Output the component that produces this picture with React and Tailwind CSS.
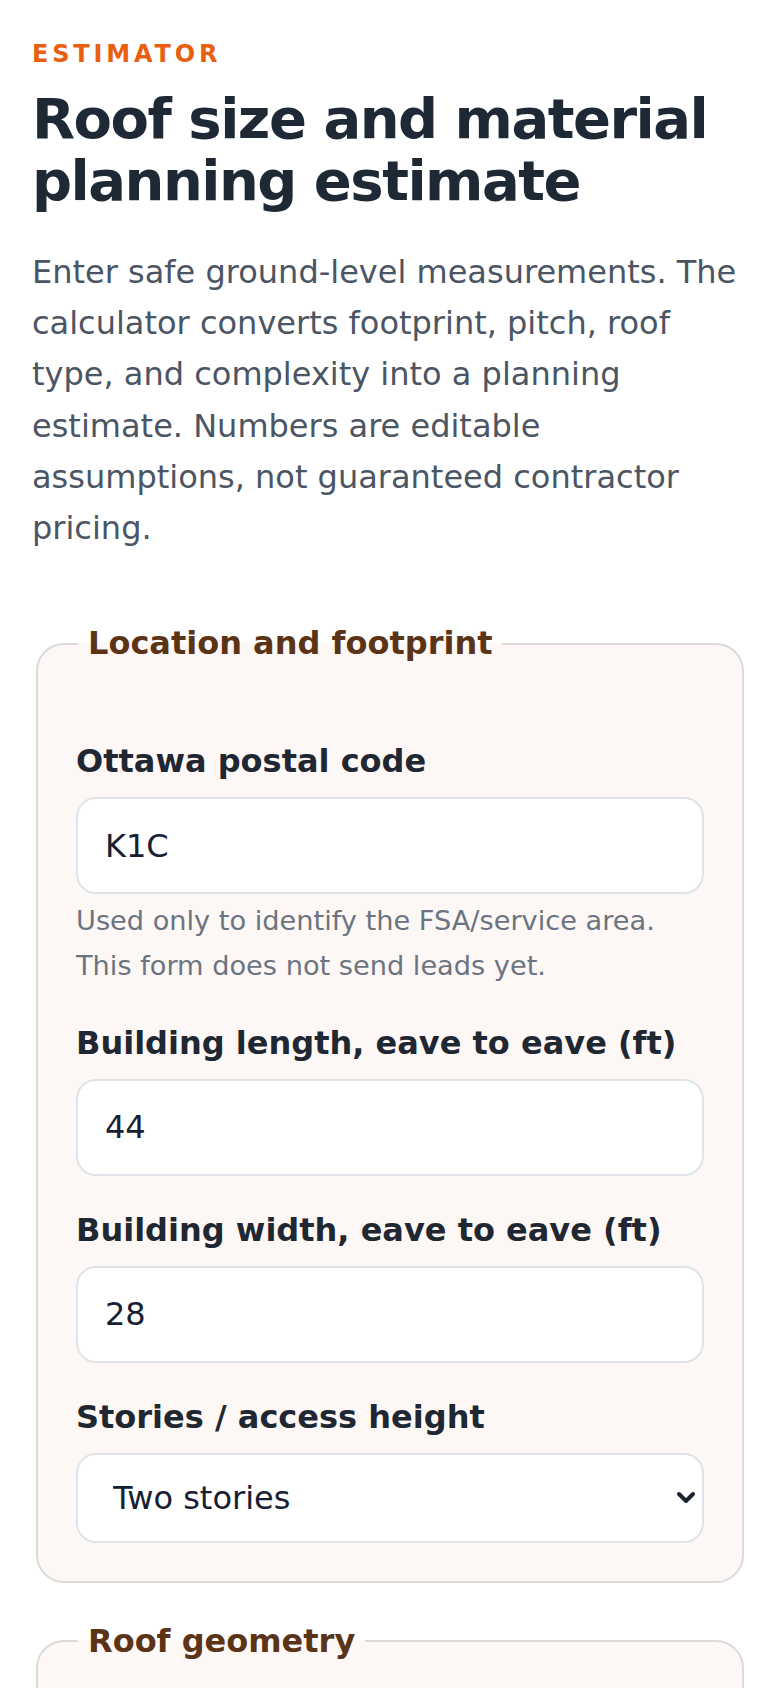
import React, { useState } from 'react';

const fieldBox =
  'block w-full h-[97px] rounded-[20px] border-2 border-[#dfe3ea] bg-white px-[27px] text-[32px] text-[#172033] outline-none';

function Field({ label, value, onChange, hint }) {
  return (
    <div className="flex flex-col">
      <label className="mb-[17px] text-[32px] font-bold leading-[38px] text-[#1f2732]">{label}</label>
      <input className={fieldBox} value={value} onChange={(e) => onChange(e.target.value)} />
      {hint && (
        <p className="mt-[5px] text-[27.2px] leading-[44.8px] text-[#6b7480]">{hint}</p>
      )}
    </div>
  );
}

function SelectField({ label, value, onChange, options }) {
  return (
    <div className="flex flex-col">
      <label className="mb-[17px] text-[32px] font-bold leading-[38px] text-[#1f2732]">{label}</label>
      <div className="relative">
        <select
          className="block w-full h-[90px] appearance-none rounded-[20px] border-2 border-[#dfe3ea] bg-white pl-[35px] pr-[48px] text-[32px] text-[#172033] outline-none"
          value={value}
          onChange={(e) => onChange(e.target.value)}
        >
          {options.map((o) => (
            <option key={o}>{o}</option>
          ))}
        </select>
        {/* native-looking chevron */}
        <svg
          className="pointer-events-none absolute right-[8px] top-1/2 -translate-y-1/2"
          width="20"
          height="14"
          viewBox="0 0 20 14"
        >
          <polyline points="3,3 10,10 17,3" fill="none" stroke="#1b2230" strokeWidth="4" strokeLinecap="round" strokeLinejoin="round" />
        </svg>
      </div>
    </div>
  );
}

function Section({ title, children, className = '' }) {
  return (
    <fieldset
      className={`mx-[4px] rounded-[28px] border-2 border-[#dcd9d9] bg-[#fdf8f5] px-[38px] pt-[80px] pb-[38px] ${className}`}
    >
      <legend className="ml-[2px] px-[10px] text-[32px] font-bold leading-[37px] text-[#5b3417]">{title}</legend>
      <div className="flex flex-col gap-[35px]">{children}</div>
    </fieldset>
  );
}

export default function App() {
  const [postal, setPostal] = useState('K1C');
  const [length, setLength] = useState('44');
  const [width, setWidth] = useState('28');
  const [stories, setStories] = useState('Two stories');
  const [pitch, setPitch] = useState('6/12');
  const [roofType, setRoofType] = useState('Gable');

  return (
    <div className="min-h-screen bg-white font-['DejaVu_Sans',sans-serif]">
      <div className="px-8 pt-[40px] pb-16">
        {/* Header */}
        <p className="text-[24px] font-bold uppercase leading-[28px] tracking-[0.16em] text-[#e8600f]">Estimator</p>
        <h1 className="mt-[20px] text-[56px] font-bold leading-[62px] tracking-[-0.027em] text-[#1e2935]">
          Roof size and material planning estimate
        </h1>
        <p className="mt-[35px] text-[32px] leading-[1.6] text-[#4b5563]">
          Enter safe ground-level measurements. The calculator converts footprint, pitch, roof type, and complexity
          into a planning estimate. Numbers are editable assumptions, not guaranteed contractor pricing.
        </p>

        {/* Form */}
        <form className="mt-[71px]" onSubmit={(e) => e.preventDefault()}>
          <Section title="Location and footprint">
            <Field
              label="Ottawa postal code"
              value={postal}
              onChange={setPostal}
              hint="Used only to identify the FSA/service area. This form does not send leads yet."
            />
            <Field label="Building length, eave to eave (ft)" value={length} onChange={setLength} />
            <Field label="Building width, eave to eave (ft)" value={width} onChange={setWidth} />
            <SelectField
              label="Stories / access height"
              value={stories}
              onChange={setStories}
              options={['One story', 'Two stories', 'Three stories']}
            />
          </Section>

          <Section title="Roof geometry" className="mt-[40px]">
            <SelectField
              label="Roof pitch"
              value={pitch}
              onChange={setPitch}
              options={['4/12', '6/12', '8/12', '10/12']}
            />
            <SelectField
              label="Roof type"
              value={roofType}
              onChange={setRoofType}
              options={['Gable', 'Hip', 'Complex']}
            />
          </Section>
        </form>
      </div>
    </div>
  );
}
